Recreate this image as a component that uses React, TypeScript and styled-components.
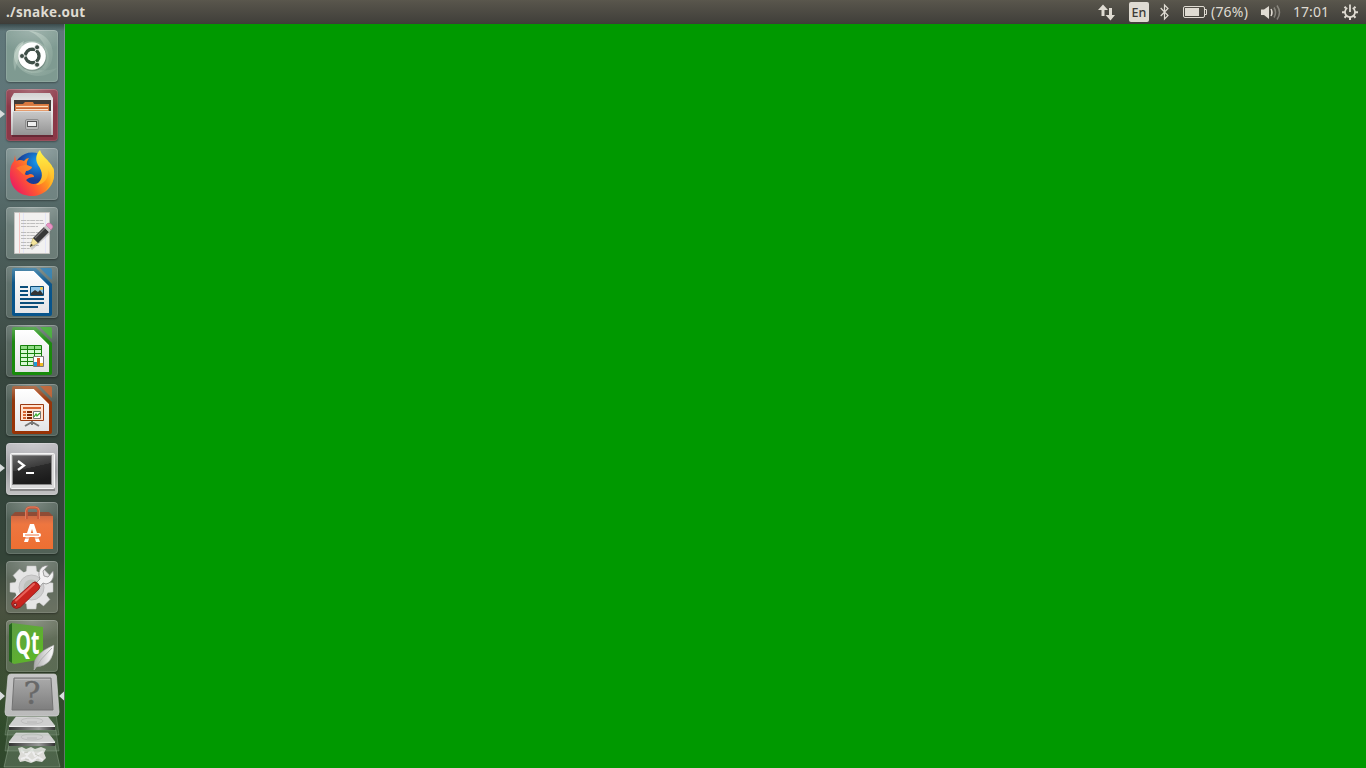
import React from 'react';
import styled, { createGlobalStyle } from 'styled-components';

const GlobalStyle = createGlobalStyle`
  html, body, #root { margin: 0; height: 100%; overflow: hidden; }
  body { font-family: "Noto Sans", "Open Sans", sans-serif; }
`;

const Desktop = styled.div`
  display: flex;
  flex-direction: column;
  width: 1366px;
  height: 768px;
`;

const TopPanel = styled.header`
  display: flex;
  flex: 0 0 24px;
  align-items: center;
  justify-content: space-between;
  box-sizing: border-box;
  padding: 0 8px 0 6px;
  color: #dfdbd2;
  background: linear-gradient(#5a574d 0, #56534a 3px, #403f3a 23px, #3c3b37 24px);
`;

const WindowTitle = styled.h1`
  margin: 0;
  font-size: 13.5px;
  line-height: 23px;
  font-weight: 700;
  letter-spacing: 0.28px;
  white-space: nowrap;
`;

const Indicators = styled.div`
  display: flex;
  align-items: center;
  height: 24px;
  svg { display: block; }
`;

const Indicator = styled.div<{ $width: number; $gap: number }>`
  display: flex;
  align-items: center;
  flex: 0 0 ${p => p.$width}px;
  width: ${p => p.$width}px;
  height: 24px;
  margin-right: ${p => p.$gap}px;
`;

const PanelText = styled.span<{ $spacing: number }>`
  font-size: 14px;
  line-height: 24px;
  letter-spacing: ${p => p.$spacing}px;
  white-space: nowrap;
`;

const Language = styled.span`
  width: 20px;
  height: 20px;
  border-radius: 2px;
  background: #dfdbd2;
  color: #3c3b37;
  font-size: 12.5px;
  font-weight: 500;
  line-height: 22px;
  text-align: center;
`;

const Workspace = styled.div`
  display: flex;
  flex: 1;
  min-height: 0;
`;

const Launcher = styled.nav`
  display: flex;
  flex-direction: column;
  gap: 7px;
  flex: 0 0 65px;
  box-sizing: border-box;
  padding-top: 6px;
  overflow: hidden;
  background:
    linear-gradient(rgba(20, 30, 30, 0.5), transparent 7px),
    radial-gradient(ellipse 40px 60px at 20px 660px, rgba(80, 96, 64, 0.35), transparent),
    linear-gradient(#60777a 0, #5f7577 130px, #4d605d 210px, #43534e 290px, #37463e 350px,
      #33443b 440px, #344438 535px, #4a5240 585px, #3b4b33 635px, #2f4a2a 700px, #31482d 744px);
  box-shadow: inset -1px 0 rgba(175, 190, 198, 0.4);
`;

const Slot = styled.div`
  position: relative;
  flex: 0 0 52px;
  padding-left: 6px;
`;

const Tile = styled.div<{ $tint: string }>`
  width: 52px;
  height: 52px;
  border-radius: 4px;
  background:
    radial-gradient(ellipse 40px 22px at 50% 0, rgba(255, 255, 255, 0.26), transparent),
    ${p => p.$tint};
  box-shadow: inset 0 0 0 1px rgba(255, 255, 255, 0.12), inset 0 1px rgba(255, 255, 255, 0.12),
    0 1px 2px rgba(0, 0, 0, 0.35);
  svg { display: block; }
`;

const RunningMark = styled.span`
  position: absolute;
  left: 0;
  top: 21px;
  border-left: 5px solid #d9dddd;
  border-top: 4.5px solid transparent;
  border-bottom: 4.5px solid transparent;
`;

const FoldedStack = styled.div`
  flex: 0 0 95px;
  margin-top: -6px;
  svg { display: block; }
`;

const Canvas = styled.main`
  flex: 1;
  background: #009900;
`;

const Art = ({ children }: { children: React.ReactNode }) => (
  <svg width="52" height="52" viewBox="0 0 52 52">{children}</svg>
);

const Dash = () => (
  <Art>
    <defs>
      <linearGradient id="swirl" x2="1" y2="1"><stop stopColor="#eef8ee" stopOpacity=".42" /><stop offset="1" stopColor="#dff0df" stopOpacity=".04" /></linearGradient>
    </defs>
    <g fill="url(#swirl)">
      <path d="M9 41C3 20 17 7 32 12C43 16 46 30 39 40L26 26L12 30Z" />
      <path d="M23 1C42 2 51 18 45 33C41 43 27 46 18 40L35 30C44 20 37 7 23 1Z" />
      <path d="M51 38C39 51 17 47 10 33C5 23 10 14 18 11C10 30 27 47 51 38Z" />
    </g>
    <circle cx="26.3" cy="27" r="14.3" fill="#3c5148" opacity=".3" />
    <circle cx="26" cy="26" r="13.8" fill="#fff" />
    <circle cx="26.2" cy="26" r="6.8" fill="none" stroke="#3f4f48" strokeWidth="3.4" />
    <path d="M26.2 26L16 26M26.2 26L31.3 17.3M26.2 26L31.3 34.7" stroke="#fff" strokeWidth=".9" />
    <circle cx="26.2" cy="26" r="5" fill="#fff" />
    <g fill="#3f4f48" stroke="#fff" strokeWidth=".8"><circle cx="16" cy="26" r="2.5" /><circle cx="31.1" cy="17.3" r="2.5" /><circle cx="31.1" cy="34.7" r="2.5" /></g>
  </Art>
);

const Files = () => (
  <Art>
    <defs>
      <linearGradient id="drawer" x2="0" y2="1"><stop stopColor="#c9c9c9" /><stop offset="1" stopColor="#949494" /></linearGradient>
      <linearGradient id="cabinet" x2="0" y2="1"><stop stopColor="#d2d2d2" /><stop offset=".35" stopColor="#f2f2f2" /><stop offset="1" stopColor="#b5b5b5" /></linearGradient>
    </defs>
    <path d="M6 45H47V48H6Z" fill="#4e2029" opacity=".6" />
    <path d="M8 4H44L47 9V46H5V9Z" fill="url(#cabinet)" />
    <path d="M8 11H45V24H8Z" fill="#423c38" />
    <path d="M9 15H17L19 13H27L28 15H43V24H9Z" fill="#d9783e" />
    <path d="M10 17.5H42" stroke="#ffe0bf" strokeWidth="1.2" /><path d="M10 19.5H42" stroke="#c96a38" /><path d="M10 20.7H42" stroke="#fff1dc" strokeWidth="1.2" />
    <path d="M7 22H45V46H7Z" fill="url(#drawer)" /><path d="M7 22.5H45" stroke="#dedede" />
    <rect x="19.5" y="30.5" width="13" height="10" rx="1.5" fill="#b9b9b9" stroke="#8c8c8c" />
    <rect x="21.5" y="32.5" width="9" height="5" fill="#f0f0f0" stroke="#555" />
  </Art>
);

const Firefox = () => (
  <Art>
    <defs>
      <linearGradient id="fox" x1="1" y1=".1" x2="0" y2=".75"><stop offset=".05" stopColor="#fff03a" /><stop offset=".38" stopColor="#ff981e" /><stop offset=".65" stopColor="#ff5634" /><stop offset="1" stopColor="#e91a63" /></linearGradient>
      <radialGradient id="globe" cx=".65" cy=".25"><stop stopColor="#169df0" /><stop offset="1" stopColor="#173e97" /></radialGradient>
      <linearGradient id="tail" x2="0" y2="1"><stop stopColor="#fff448" /><stop offset="1" stopColor="#ffa21d" /></linearGradient>
    </defs>
    <circle cx="26" cy="23" r="18.5" fill="url(#globe)" />
    <path d="M9 7L10 13Q14 11 18 13Q20 10 23 10Q20 14 21 17L26 19Q25 22 20 23L19 26Q20 28 24 26Q28 26 28 29Q23 29 20 32Q25 38 32 35Q39 31 38 23L43 14Q49 20 48 28C47 40 37 48 26 48C13 48 3 39 4 25Q4 17 8 13Z" fill="url(#fox)" />
    <path d="M34 2C30 6 29 11 32 17C37 24 38 31 30 37C38 37 43 30 42 22C48 29 44 39 38 44C47 38 50 28 47 19C46 22 45 20 44 17C43 11 36 9 34 2Z" fill="url(#tail)" />
    <path d="M10 20Q15 17 20 17L26 19Q25 22 20 23L18 27Z" fill="#ff9528" opacity=".55" />
  </Art>
);

const Editor = () => (
  <Art>
    <path d="M8.5 5.5H43.5V46.5H8.5Z" fill="#f2f1f0" stroke="#c5c3c0" />
    <path d="M13.5 6V46" stroke="#f4c5c2" /><path d="M17.5 6V46M39.5 6V46" stroke="#e4e5f7" />
    <path d="M15 13.5H37M15 16.5H38M15 19.5H32M15 25.5H37M15 28.5H38M15 31.5H30M15 35.5H34M15 38.5H33M15 41.5H24" stroke="#bdbdbd" strokeDasharray="5 .7 3 .5" />
    <path d="M25 42L45 24" stroke="#777" strokeWidth="3" opacity=".3" />
    <path d="M24 40L27 31L32 36Z" fill="#f3e49b" stroke="#b7a65d" strokeWidth=".5" /><path d="M24 40L25 37L27 38Z" fill="#222" />
    <path d="M27 31L38 20L43 25L32 36Z" fill="#383838" /><path d="M29 31L39 21" stroke="#777" strokeWidth="1.2" />
    <path d="M38 20L40 18L45 23L43 25Z" fill="#c9c9c9" /><path d="M40 18L42 16Q46 16 47 20L45 23Z" fill="#e993c4" stroke="#b66695" strokeWidth=".5" />
  </Art>
);

type OfficeProps = { dark: string; light: string; name: string; children: React.ReactNode };
const OfficeDocument = ({ dark, light, name, children }: OfficeProps) => (
  <Art>
    <defs>
      <linearGradient id={`${name}-frame`} x2="0" y2="1"><stop stopColor={light} stopOpacity=".55" /><stop offset=".3" stopColor={dark} stopOpacity=".9" /><stop offset=".6" stopColor={dark} /></linearGradient>
      <linearGradient id={`${name}-paper`} x2="0" y2="1"><stop stopColor="#fff" /><stop offset="1" stopColor="#e4e4e6" /></linearGradient>
    </defs>
    <path d="M8 2H30L46 18V48Q46 50 44 50H8Q6 50 6 48V4Q6 2 8 2Z" fill={`url(#${name}-frame)`} />
    <path d="M34 2H44Q46 2 46 4V14Z" fill={light} opacity=".72" />
    <path d="M9 5H28L43 20V47H9Z" fill={`url(#${name}-paper)`} />
    <path d="M28 5L43 20" stroke={light} strokeOpacity=".5" />
    {children}
  </Art>
);

const Writer = () => (
  <OfficeDocument dark="#07548b" light="#2a86c4" name="writer">
    <path d="M14 21H22M14 25H22M14 29H22M14 33H38M14 37H38M14 41H32" stroke="#0a4e7b" strokeWidth="2" />
    <path d="M24.5 20.5H37.5V29.5H24.5Z" fill="#8fc6e8" stroke="#0a4e7b" /><path d="M25 29V27L29 24L32 26L34 24L37 28V29Z" fill="#333" /><circle cx="35.5" cy="22.5" r="1.4" fill="#f7ce42" />
  </OfficeDocument>
);

const Calc = () => (
  <OfficeDocument dark="#188b0b" light="#43c330" name="calc">
    <path d="M14.5 20.5H35.5V40.5H14.5Z" fill="#d7f8d2" /><path d="M14.5 20.5H35.5V24.5H14.5Z" fill="#91dc86" />
    <path d="M14.5 20.5H35.5V40.5H14.5ZM14.5 24.5H35.5M14.5 28.5H35.5M14.5 32.5H35.5M14.5 36.5H35.5M21.5 20.5V40.5M28.5 20.5V40.5" fill="none" stroke="#16800c" />
    <path d="M27.5 31.5H37.5V41.5H27.5Z" fill="#fff" stroke="#777" /><path d="M28 37H31V41H28Z" fill="#1c9bd7" /><path d="M31 33H34V41H31Z" fill="#dd5427" /><path d="M34 38H37V41H34Z" fill="#edbd25" />
  </OfficeDocument>
);

const Impress = () => (
  <OfficeDocument dark="#983306" light="#df642b" name="impress">
    <path d="M26 37V41M26 38L19 42M26 38L33 42" stroke="#777" strokeWidth="2" />
    <path d="M14.5 20.5H37.5V36.5H14.5Z" fill="#ffe2d0" stroke="#9b3a12" /><path d="M17 24H35" stroke="#d66331" strokeWidth="2" />
    <path d="M17 28H20M17 31H20M17 34H20" stroke="#d66331" strokeWidth="2" /><path d="M21 28H26M21 31H26M21 34H26" stroke="#7d2705" strokeWidth="2" />
    <path d="M27.5 27.5H34.5V34.5H27.5Z" fill="#fff" stroke="#777" /><path d="M28 33L30 30L31 32L34 29" fill="none" stroke="#35ad2c" strokeWidth="1.3" />
  </OfficeDocument>
);

const Terminal = () => (
  <Art>
    <defs><linearGradient id="screen" x2=".3" y2="1"><stop stopColor="#666" /><stop offset=".5" stopColor="#3c3c3c" /><stop offset=".51" stopColor="#2b2b2b" /><stop offset="1" stopColor="#1c1c1c" /></linearGradient></defs>
    <path d="M4 43H49V48H4Z" fill="#666" opacity=".6" /><rect x="4.5" y="10.5" width="44" height="35" rx="1" fill="#dadada" stroke="#f5f5f5" />
    <path d="M6 12H46V42H6Z" fill="#888" /><path d="M7 13H45V41H7Z" fill="url(#screen)" />
    <path d="M12 18L18 22.5L12 27" fill="none" stroke="#fff" strokeWidth="2.3" /><path d="M20 30H28" stroke="#fff" strokeWidth="2" />
  </Art>
);

const Software = () => (
  <Art>
    <defs><linearGradient id="bag" x2="0" y2="1"><stop stopColor="#cf6a45" /><stop offset=".25" stopColor="#ee7640" /><stop offset="1" stopColor="#ed6f32" /></linearGradient></defs>
    <path d="M5 14H47V47H5Z" fill="url(#bag)" /><path d="M5 14L9 10H43L47 14Z" fill="#8f4c36" />
    <path d="M20.5 17V9Q20.5 5.5 24 5.5H29Q32.5 5.5 32.5 9V17" fill="none" stroke="#c9583a" strokeWidth="2.6" />
    <path d="M19.5 17V9Q20 5 24 5H29Q33 5 33.5 9V17" fill="none" stroke="#ed9676" strokeWidth=".6" />
    <path d="M24 22H28L34 40H30L26 27L22 40H18Z" fill="#fff" />
    <path d="M17 31H33Q35 31 35 33T33 35H17Z" fill="#fff" /><path d="M19 33H33" stroke="#ee7440" /><path d="M17 36H35" stroke="#ee7440" />
  </Art>
);

const Settings = () => (
  <Art>
    <g transform="translate(25.5 26.5)">
      <g fill="#e5e5e5" stroke="#c0c0c0" strokeWidth=".5">
        {[0, 45, 90, 135, 180, 225, 270, 315].map(a => <path key={a} d="M-5.5 -13L-4.5 -21.5H4.5L5.5 -13Z" transform={`rotate(${a})`} />)}
      </g>
      <circle r="17" fill="#e5e5e5" /><circle r="12.5" fill="#cfcfcf" stroke="#bebebe" /><circle r="8" fill="#bcc0ba" />
    </g>
    <path d="M27 25L34 18Q31 11 36 6Q39 4 42 4.5L37 10L38 15L42 16L47 10Q49 18 43 22Q40 24 37 22L31 29Z" fill="#f2f2f2" stroke="#8d8d8d" strokeWidth=".8" />
    <path d="M26.5 22Q29 19.5 32 22.5T33 28L14.5 46Q10 49 7 46Q4 42.5 7 39.5Z" fill="#c9251f" stroke="#8b1517" strokeWidth=".8" />
    <path d="M10 39.5L28 23" stroke="#e8625a" strokeWidth="2" strokeLinecap="round" /><circle cx="9.2" cy="43.8" r="1.5" fill="#d8b4b0" stroke="#7c1515" />
  </Art>
);

const QtLabel = styled.text`
  font: 700 33px "Open Sans", "Noto Sans", sans-serif;
  fill: #fff;
`;

const QtCreator = () => (
  <Art>
    <defs><linearGradient id="qt" x2="1" y2="1"><stop stopColor="#5e9d45" /><stop offset="1" stopColor="#5dbb22" /></linearGradient><linearGradient id="leaf"><stop stopColor="#aaa" /><stop offset="1" stopColor="#fff" /></linearGradient></defs>
    <path d="M3 5L6 3L37 7V39L8 44L3 41Z" fill="url(#qt)" /><path d="M3 5L6 3V43L3 41Z" fill="#25651d" />
    <QtLabel x="9.5" y="34" textLength="24" lengthAdjust="spacingAndGlyphs">Qt</QtLabel>
    <path d="M28 46Q27 34 48 25Q48 46 30 47L28 50Z" fill="url(#leaf)" stroke="#999" strokeWidth=".5" /><path d="M28 50Q34 39 46 28" fill="none" stroke="#b0b0b0" />
  </Art>
);

const Question = styled.text`
  font: 400 31px "DejaVu Serif", serif;
  fill: #686868;
  stroke: #686868;
  stroke-width: 0.4px;
`;

const Disk = ({ y }: { y: number }) => (
  <g transform={`translate(0 ${y})`}>
    <path d="M8 -3H56L59 18H5Z" fill="#bdcbbb" fillOpacity=".16" stroke="#a9bda8" strokeOpacity=".28" />
    <path d="M16 0H48L55 9H9Z" fill="#cfcfcf" stroke="#e2e2e2" strokeWidth=".6" />
    <ellipse cx="32" cy="4" rx="11" ry="3" fill="none" stroke="#bdbdbd" /><path d="M27 5H37" stroke="#b6b6b6" />
    <path d="M9 9.5H55V13H9Z" fill="url(#disk)" /><path d="M9 9.5H55" stroke="#ededed" />
  </g>
);

const FoldedIcons = () => (
  <svg width="65" height="95" viewBox="0 0 65 95">
    <defs>
      <linearGradient id="metal" x2="0" y2="1"><stop stopColor="#c6c6c6" /><stop offset="1" stopColor="#bababa" /></linearGradient>
      <linearGradient id="unknown" x2="0" y2="1"><stop stopColor="#aaa" /><stop offset="1" stopColor="#7e7e7e" /></linearGradient>
      <linearGradient id="disk"><stop stopColor="#333" /><stop offset=".65" stopColor="#999" /><stop offset="1" stopColor="#333" /></linearGradient>
    </defs>
    <path d="M9 72H55L60 94H4Z" fill="#b8c8b5" fillOpacity=".22" stroke="#aac1a7" strokeOpacity=".4" />
    <path d="M18 75L22 74L26 76L31 74L35 76L41 74L46 76L44 80L46 85L42 89L36 88L31 90L25 88L20 89L18 85L20 81Z" fill="#dcdcd8" />
    <path d="M21 77L27 82L32 77L35 83L43 78M21 86L27 84L32 88L38 84L43 87" fill="none" stroke="#eee" strokeWidth="2" strokeLinejoin="round" />
    <path d="M24 80L28 79M35 81L39 83M25 86L29 87M36 87L39 87" stroke="#c5c7bf" />
    <Disk y={60} /><Disk y={44} />
    <path d="M11 1H54Q56 1 56.4 3L59 39Q59 43 56 43H8Q5 43 5 39L8 3Q8.5 1 11 1Z" fill="url(#metal)" stroke="#d2d2d2" strokeWidth=".7" />
    <path d="M14 5H51L53 37H12Z" fill="url(#unknown)" stroke="#737373" /><path d="M15 6.5H50" stroke="#bababa" />
    <Question x="32" y="31" textAnchor="middle" textLength="17" lengthAdjust="spacingAndGlyphs">?</Question>
    <path d="M0 18.5L5 23L0 27.5ZM64 18.5L59 23L64 27.5Z" fill="#d9dddd" />
  </svg>
);

const metalTint = 'linear-gradient(#b9b9bd, #a0a0a4 55%, #c2c2c2)';
const apps = [
  { name: 'Dash', Icon: Dash, tint: 'rgba(158, 190, 170, .5)' },
  { name: 'Files', Icon: Files, tint: 'rgba(151, 38, 58, .78)', running: true },
  { name: 'Firefox', Icon: Firefox, tint: 'rgba(172, 188, 180, .32)' },
  { name: 'Text Editor', Icon: Editor, tint: 'rgba(172, 188, 180, .34)' },
  { name: 'Writer', Icon: Writer, tint: 'rgba(170, 186, 178, .25)' },
  { name: 'Calc', Icon: Calc, tint: 'rgba(170, 186, 178, .25)' },
  { name: 'Impress', Icon: Impress, tint: 'rgba(170, 186, 178, .25)' },
  { name: 'Terminal', Icon: Terminal, tint: metalTint, running: true },
  { name: 'Software', Icon: Software, tint: 'rgba(170, 186, 178, .25)' },
  { name: 'Settings', Icon: Settings, tint: 'rgba(178, 186, 174, .3)' },
  { name: 'Qt Creator', Icon: QtCreator, tint: 'rgba(178, 190, 174, .28)' },
];

export default function App() {
  return (
    <Desktop>
      <GlobalStyle />
      <TopPanel>
        <WindowTitle>./snake.out</WindowTitle>
        <Indicators>
          <Indicator $width={17} $gap={14}>
            <svg width="17" height="24" viewBox="0 0 17 24" fill="#dfdbd2"><path d="M5 4.5L10 10H6.5V16H3.5V10H0ZM12.5 20.5L7.5 15H11V8H14V15H17Z" /></svg>
          </Indicator>
          <Indicator $width={20} $gap={11}><Language>En</Language></Indicator>
          <Indicator $width={9} $gap={14}>
            <svg width="9" height="24" viewBox="0 0 9 24" fill="none" stroke="#dfdbd2" strokeWidth="1.2"><path d="M.7 8L8 15.5L4.5 19V5L8 8.5L.7 16" /></svg>
          </Indicator>
          <Indicator $width={25} $gap={3}>
            <svg width="25" height="24" viewBox="0 0 25 24"><rect x=".5" y="6.5" width="21" height="11" rx="1.5" fill="none" stroke="#dfdbd2" /><path d="M2 8H16V16H2Z" fill="#dfdbd2" /><path d="M22 9.5H23.5V14.5H22" fill="none" stroke="#dfdbd2" /></svg>
          </Indicator>
          <Indicator $width={38} $gap={12}><PanelText $spacing={0.2}>(76%)</PanelText></Indicator>
          <Indicator $width={20} $gap={12}>
            <svg width="20" height="24" viewBox="0 0 20 24" fill="none" stroke="#dfdbd2" strokeWidth="1.5"><path d="M0 9.5H3L8 6V19L3 15H0Z" fill="#dfdbd2" stroke="none" /><path d="M10 9Q12 12.5 10 16" /><path d="M13 7.5Q16 12.5 13 17.5M16 5.5Q21 12.5 16 19.5" opacity=".4" /></svg>
          </Indicator>
          <Indicator $width={37} $gap={12}><PanelText $spacing={0.05}>17:01</PanelText></Indicator>
          <Indicator $width={16} $gap={0}>
            <svg width="16" height="24" viewBox="0 0 16 24" fill="none" stroke="#dfdbd2"><path d="M5.3 7.9A5 5 0 1 0 10.7 7.9" strokeWidth="1.7" /><path d="M8 4.5V12" strokeWidth="1.8" /><path d="M4 8.2L2.5 6.7M12 8.2L13.5 6.7M3 12.2H0M13 12.2H16M4.4 15.8L2.5 17.7M11.6 15.8L13.5 17.7M8 17V20" strokeWidth="2" /></svg>
          </Indicator>
        </Indicators>
      </TopPanel>
      <Workspace>
        <Launcher>
          {apps.map(({ name, Icon, tint, running }) => (
            <Slot key={name}>
              {running && <RunningMark />}
              <Tile $tint={tint}><Icon /></Tile>
            </Slot>
          ))}
          <FoldedStack><FoldedIcons /></FoldedStack>
        </Launcher>
        <Canvas />
      </Workspace>
    </Desktop>
  );
}
